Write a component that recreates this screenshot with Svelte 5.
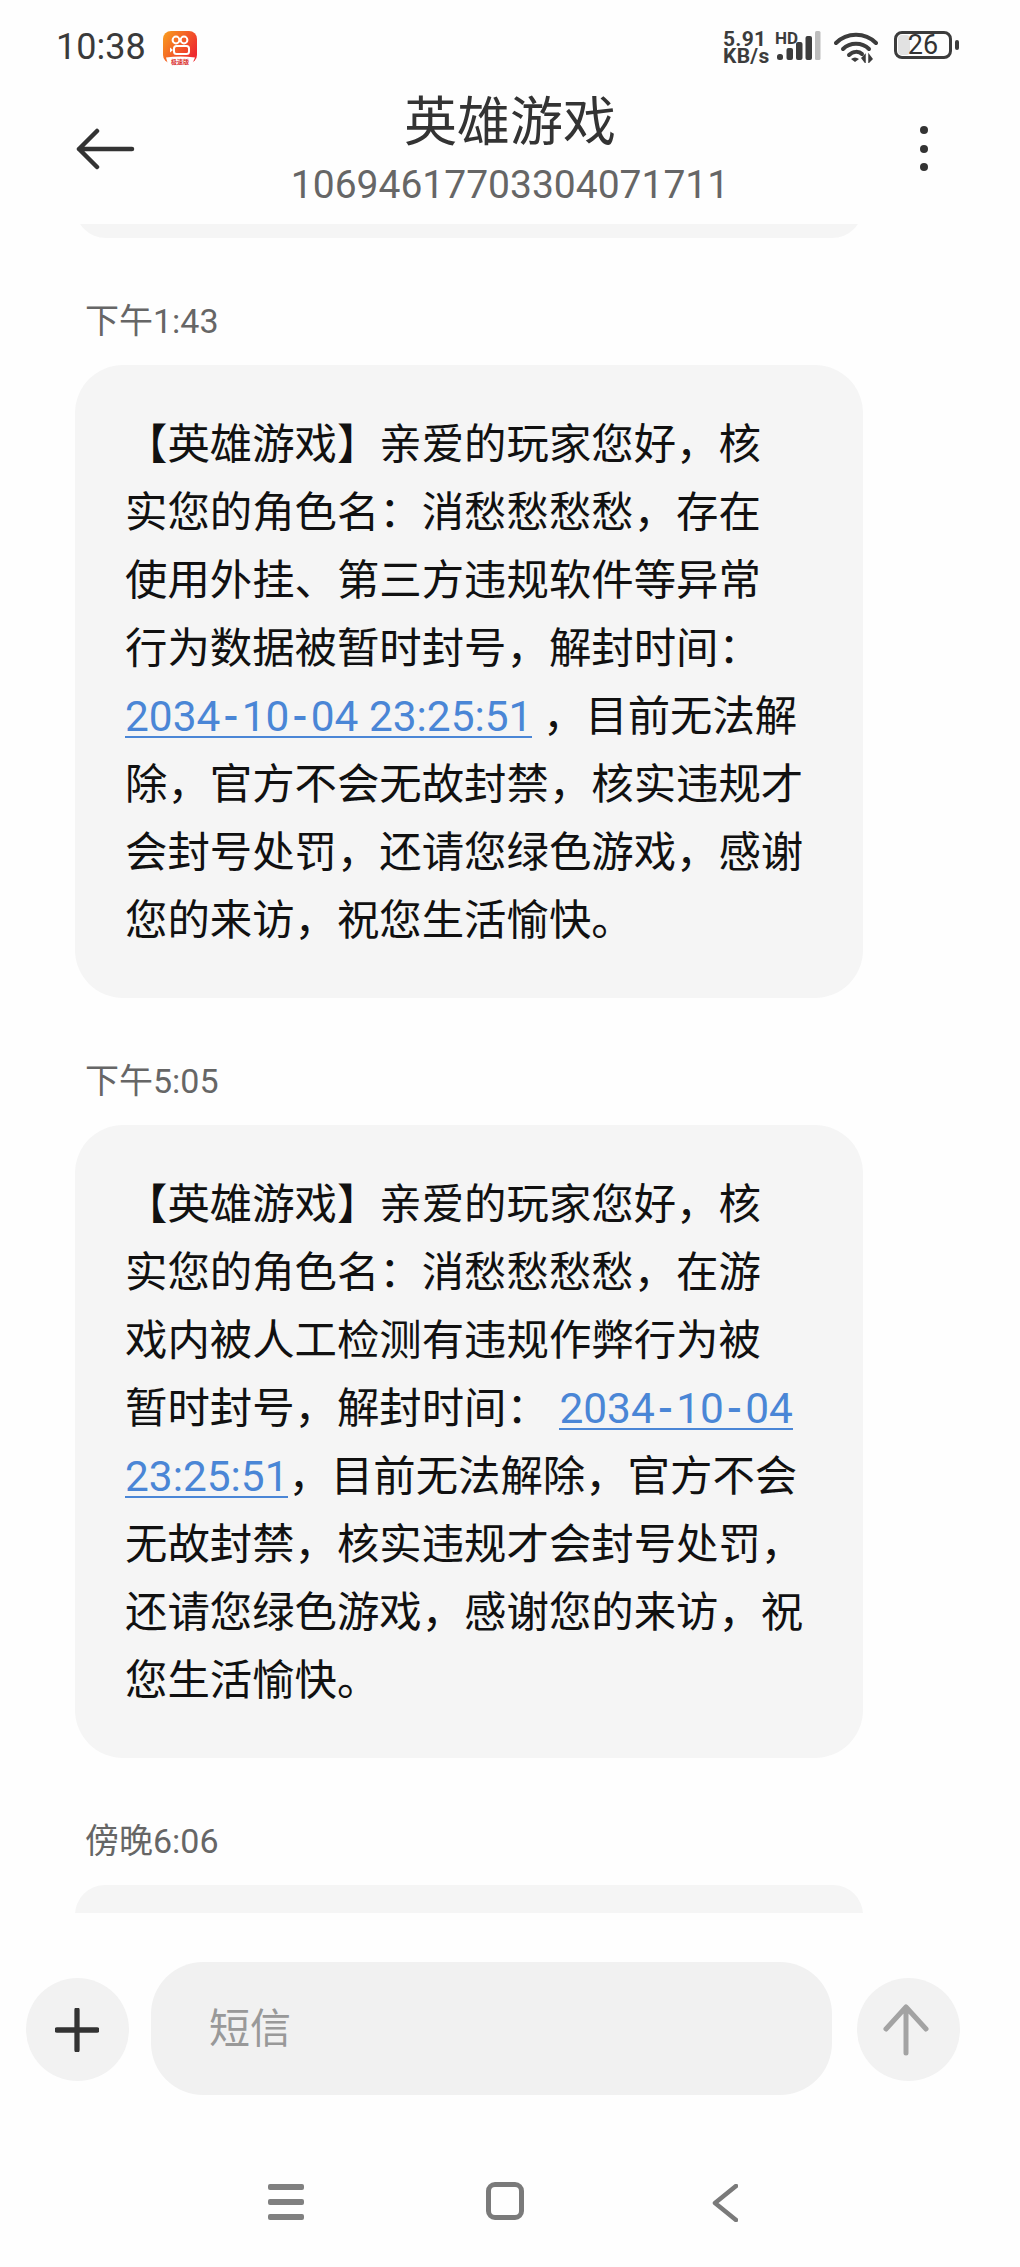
<script>
  const date = (t) => ({ t, isDate: true });

  const messages = [
    {
      time: '下午1:43',
      lines: [
        ['【英雄游戏】亲爱的玩家您好，核'],
        ['实您的角色名：消愁愁愁愁，存在'],
        ['使用外挂、第三方违规软件等异常'],
        ['行为数据被暂时封号，解封时间：'],
        [date('2034-10-04 23:25:51'), ' ，目前无法解'],
        ['除，官方不会无故封禁，核实违规才'],
        ['会封号处罚，还请您绿色游戏，感谢'],
        ['您的来访，祝您生活愉快。'],
      ],
    },
    {
      time: '下午5:05',
      lines: [
        ['【英雄游戏】亲爱的玩家您好，核'],
        ['实您的角色名：消愁愁愁愁，在游'],
        ['戏内被人工检测有违规作弊行为被'],
        ['暂时封号，解封时间： ', date('2034-10-04')],
        [date('23:25:51'), '，目前无法解除，官方不会'],
        ['无故封禁，核实违规才会封号处罚，'],
        ['还请您绿色游戏，感谢您的来访，祝'],
        ['您生活愉快。'],
      ],
    },
  ];
</script>

<div class="screen">
  <div class="status">
    <div class="status-left">
      <span class="clock">10:38</span>
      <svg class="app-icon" width="36" height="36" viewBox="0 0 36 36">
        <defs>
          <linearGradient id="appg" x1="0" y1="0" x2="1" y2="0.6">
            <stop offset="0" stop-color="#f9a01e" />
            <stop offset="1" stop-color="#ee2a2f" />
          </linearGradient>
        </defs>
        <rect x="1" y="1" width="34" height="32" rx="8" fill="url(#appg)" />
        <circle cx="14" cy="10" r="3.4" fill="none" stroke="#fff" stroke-width="2" />
        <circle cx="22" cy="10" r="3.4" fill="none" stroke="#fff" stroke-width="2" />
        <rect x="12" y="16" width="15" height="8" rx="2.5" fill="none" stroke="#fff" stroke-width="2" />
        <path d="M11 20l-3-2.500v5z" fill="#fff" />
        <path d="M4 27.500q14-2 29 0l-3 7h-24z" fill="#fff" />
        <text x="18" y="33.500" text-anchor="middle" class="app-label">极速版</text>
      </svg>
    </div>
    <div class="status-right">
      <div class="speed"><span>5.91</span><span>KB/s</span></div>
      <div class="signal">
        <span class="hd">HD</span>
        <svg width="44" height="30" viewBox="0 0 44 30">
          <rect x="0" y="23" width="6" height="6" rx="2.500" fill="#3c3c3c" />
          <rect x="9.500" y="17" width="6.500" height="12" rx="2" fill="#3c3c3c" />
          <rect x="19" y="11" width="6.500" height="18" rx="2" fill="#3c3c3c" />
          <rect x="28.500" y="5" width="6.500" height="24" rx="2" fill="#3c3c3c" />
          <rect x="38" y="0" width="5.500" height="29" rx="1.500" fill="#bdbdbd" />
        </svg>
      </div>
      <svg class="wifi" width="44" height="32" viewBox="0 0 44 32">
        <path d="M2 12C13 1 31 1 42 12" fill="none" stroke="#3c3c3c" stroke-width="4" stroke-linecap="round" />
        <path d="M9 18C16 11 28 11 35 18" fill="none" stroke="#3c3c3c" stroke-width="4" stroke-linecap="round" />
        <path d="M15 24C19 20 25 20 28 23" fill="none" stroke="#3c3c3c" stroke-width="4" stroke-linecap="round" />
        <path d="M17 28q4-3 8 0l-4 3z" fill="#3c3c3c" />
        <path d="M31 31v-7l-3 3zM35 24v7l3-3z" fill="#3c3c3c" stroke="#3c3c3c" stroke-width="1.500" />
      </svg>
      <div class="battery-wrap">
        <div class="battery"><span class="battery-fill"></span><span class="battery-num">26</span></div>
        <span class="nub"></span>
      </div>
    </div>
  </div>

  <header class="topbar">
    <svg class="back" width="60" height="42" viewBox="0 0 60 42">
      <path d="M57 21H4M22 3L4 21l18 18" fill="none" stroke="#333" stroke-width="4.500" stroke-linecap="round" stroke-linejoin="round" />
    </svg>
    <div class="who">
      <div class="title">英雄游戏</div>
      <div class="number">10694617703304071711</div>
    </div>
    <div class="dots"><i></i><i></i><i></i></div>
  </header>

  <div class="list">
    <div class="bubble prev"></div>
    {#each messages as m}
      <div class="stamp">{m.time}</div>
      <div class="bubble">
        {#each m.lines as line}
          <div class="line">{#each line as seg}{#if seg.isDate}<a href="#top" class="link">{#each seg.t.split('-') as part, i}{#if i > 0}<span class="hy">-</span>{/if}{part}{/each}</a>{:else}{seg}{/if}{/each}</div>
        {/each}
      </div>
    {/each}
    <div class="stamp">傍晚6:06</div>
    <div class="bubble next"></div>
  </div>

  <div class="composer">
    <div class="round">
      <svg class="plus" width="44" height="44" viewBox="0 0 46 46">
        <path d="M23 2v42M2 23h42" stroke="#333" stroke-width="5.500" stroke-linecap="round" />
      </svg>
    </div>
    <div class="input">短信</div>
    <div class="round send">
      <svg class="arrow" width="46" height="52" viewBox="0 0 46 52">
        <path d="M23 49V3M3 25L23 3l20 22" fill="none" stroke="#a3a3a3" stroke-width="5" stroke-linecap="round" stroke-linejoin="round" />
      </svg>
    </div>
  </div>

  <nav class="nav">
    <div class="menu"><i></i><i></i><i></i></div>
    <div class="home"></div>
    <svg class="nav-back" width="26" height="38" viewBox="0 0 26 38">
      <path d="M24 2L3 19l21 17" fill="none" stroke="#7a7a7a" stroke-width="4.500" stroke-linecap="round" stroke-linejoin="round" />
    </svg>
  </nav>
</div>

<style>
  :global(body) { margin:0; background:#fff; }
  .screen { width:1020px; height:2267px; display:flex; flex-direction:column; overflow:hidden; background:#fefefe; font-family:Roboto, "Noto Sans CJK SC", sans-serif; color:#111; }

  .status { height:65px; padding:0 61px 0 56px; display:flex; justify-content:space-between; box-sizing:border-box; }
  .status-left { display:flex; align-items:center; gap:16px; padding-top:28px; height:37px; }
  .clock { font-size:36px; line-height:36px; color:#3a3a3a; }
  .app-icon { margin-top:2px; }
  .app-label { font-size:6px; font-weight:700; fill:#d92d2d; font-family:"Noto Sans CJK SC", sans-serif; }
  .status-right { display:flex; align-items:flex-start; padding-top:31px; }
  .speed { display:flex; flex-direction:column; width:52px; font-size:21px; line-height:17px; font-weight:700; color:#3c3c3c; letter-spacing:.3px; }
  .signal { position:relative; width:44px; height:30px; margin-left:2px; }
  .signal svg { position:absolute; left:0; top:0; }
  .hd { position:absolute; left:-2px; top:0; font-size:17px; line-height:15px; font-weight:700; color:#3c3c3c; }
  .wifi { margin-left:13px; }
  .battery-wrap { display:flex; align-items:center; gap:3px; margin-left:16px; }
  .battery { position:relative; width:58px; height:28px; box-sizing:border-box; border:3px solid #3c3c3c; border-radius:8px; display:flex; align-items:center; justify-content:center; }
  .battery-fill { position:absolute; left:1px; top:1px; bottom:1px; width:12px; background:#e2e2e2; border-radius:4px; }
  .battery-num { position:relative; font-size:27px; line-height:22px; color:#333; }
  .nub { width:4px; height:10px; background:#3c3c3c; border-radius:2px; }

  .topbar { height:159px; box-sizing:border-box; padding:27px 75px 0; display:grid; grid-template-columns:1fr auto 1fr; align-items:start; }
  .back { margin-top:36px; }
  .who { text-align:center; }
  .title { font-size:53px; line-height:62px; color:#333; }
  .number { margin-top:8px; font-size:39px; line-height:46px; color:#666; }
  .dots { justify-self:end; margin:34px 17px 0 0; display:flex; flex-direction:column; gap:10.500px; }
  .dots i { display:block; width:8px; height:8px; border-radius:50%; background:#333; }

  .list { height:1689px; flex:none; overflow:hidden; display:flex; flex-direction:column; padding:0 157px 0 75px; }
  .bubble { flex:none; background:#f5f5f5; border-radius:48px; padding:46px 50px 43px; }
  .prev { height:62px; padding:0; margin-top:-48px; }
  .next { height:60px; padding:0; }
  .stamp { flex:none; margin:61px 0 22px 10px; font-size:34px; line-height:44px; color:#666; }
  .line { height:68px; font-size:42.400px; line-height:68px; white-space:pre; color:#111; }
  .link { color:#4a86d6; text-decoration:none; background:linear-gradient(#4a86d6, #4a86d6) no-repeat left bottom 3px / 100% 2px; }
  .hy { padding:0 3.500px; font-weight:500; }

  .composer { height:217px; flex:none; box-sizing:border-box; padding:49px 48px 0 26px; display:flex; align-items:flex-start; }
  .round { flex:none; width:103px; height:103px; margin-top:16px; border-radius:50%; background:#f2f2f2; display:flex; align-items:center; justify-content:center; }
  .plus { margin-left:-2px; }
  .arrow { margin-left:-5px; }
  .input { flex:none; width:681px; height:133px; margin:0 25px 0 22px; box-sizing:border-box; padding:0 58px; border-radius:52px; background:#f1f1f1; font-size:41px; line-height:127px; color:#999; font-family:"Noto Sans CJK SC", sans-serif; }

  .nav { flex:1; padding:54px 0 0 268px; display:flex; align-items:flex-start; gap:182px; }
  .menu { width:36px; height:36px; display:flex; flex-direction:column; justify-content:space-between; }
  .menu i { display:block; height:6px; border-radius:2px; background:#808080; }
  .home { width:38px; height:38px; box-sizing:border-box; border:5px solid #7a7a7a; border-radius:9px; margin-top:-2px; }
  .nav-back { margin-left:6px; }
</style>
